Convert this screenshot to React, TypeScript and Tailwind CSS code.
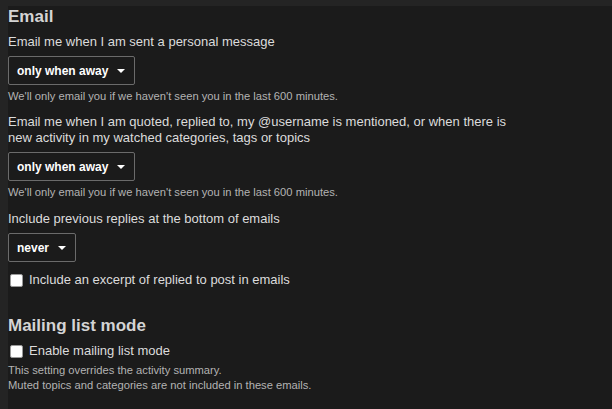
function Caret() {
  return (
    <svg width="8" height="4" viewBox="0 0 8 4" className="ml-[9px]">
      <path d="M0 0h8L4 4z" fill="#ffffff" />
    </svg>
  );
}

function Select({ value }: { value: string }) {
  return (
    <div className="inline-flex items-center h-[29px] pl-[8px] pr-[9px] border border-[#6b6b6b] rounded-[2px] bg-[#1b1b1b] text-[12px] font-bold text-white">
      {value}
      <Caret />
    </div>
  );
}

function Checkbox({ label }: { label: string }) {
  return (
    <label className="flex items-center h-[16px] gap-[6px] ml-[2px]">
      <span className="w-[13px] h-[13px] bg-white rounded-[2px] border border-[#9a9a9a]" />
      <span className="text-[13px] text-[#dcdcdc]">{label}</span>
    </label>
  );
}

export default function App() {
  return (
    <div
      className="w-[612px] h-[409px] bg-[#242424] pt-[6px] pl-[8px] overflow-hidden"
      style={{ fontFamily: '"Liberation Sans", Arial, sans-serif' }}
    >
      <div className="h-full bg-[#1b1b1b]">
        <h2 className="text-[17px] font-bold text-[#d4d4d4] leading-[22px]">Email</h2>

        <div className="mt-[6px] text-[13px] text-[#dcdcdc] leading-[16px]">Email me when I am sent a personal message</div>
        <div className="mt-[6px] flex"><Select value="only when away" /></div>
        <div className="mt-[4px] text-[11.2px] text-[#b3b3b3] leading-[14px]">We'll only email you if we haven't seen you in the last 600 minutes.</div>

        <div className="mt-[11px] w-[520px] text-[13px] text-[#dcdcdc] leading-[16px]">
          Email me when I am quoted, replied to, my @username is mentioned, or when there is new activity in my watched categories, tags or topics
        </div>
        <div className="mt-[6px] flex"><Select value="only when away" /></div>
        <div className="mt-[4px] text-[11.2px] text-[#b3b3b3] leading-[14px]">We'll only email you if we haven't seen you in the last 600 minutes.</div>

        <div className="mt-[12px] text-[13px] text-[#dcdcdc] leading-[16px]">Include previous replies at the bottom of emails</div>
        <div className="mt-[6px] flex"><Select value="never" /></div>

        <div className="mt-[10px]"><Checkbox label="Include an excerpt of replied to post in emails" /></div>

        <h2 className="mt-[27px] text-[17px] font-bold text-[#d4d4d4] leading-[22px]">Mailing list mode</h2>
        <div className="mt-[6px]"><Checkbox label="Enable mailing list mode" /></div>
        <div className="mt-[4px] text-[11.2px] text-[#b3b3b3] leading-[15px]">
          This setting overrides the activity summary.
          <br />
          Muted topics and categories are not included in these emails.
        </div>
      </div>
    </div>
  );
}
